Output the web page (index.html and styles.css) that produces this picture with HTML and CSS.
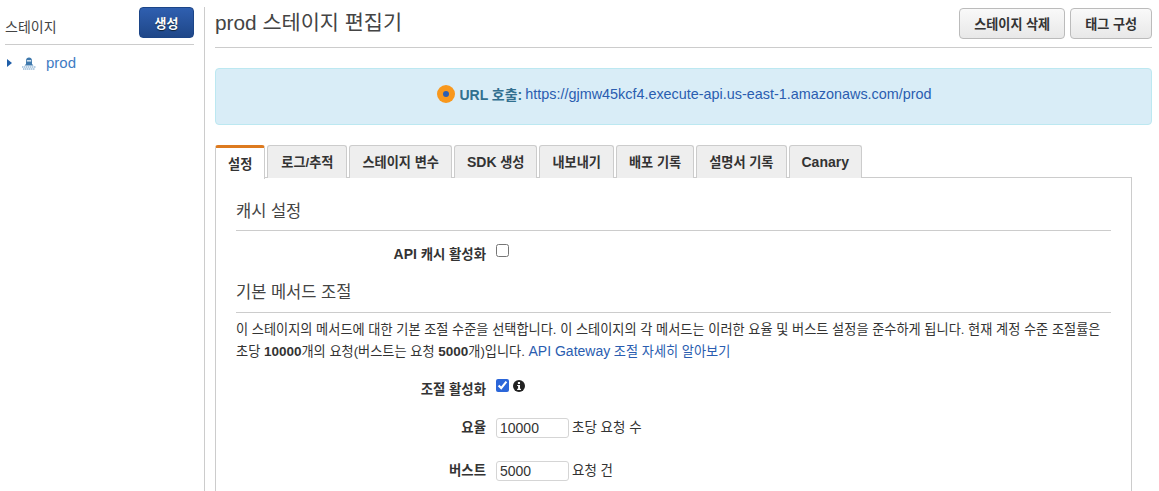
FILE: index.html
```html
<!DOCTYPE html>
<html lang="ko">
<head>
<meta charset="utf-8">
<title>prod 스테이지 편집기</title>
<link rel="stylesheet" href="styles.css">
</head>
<body>
<div class="app">
  <aside class="sidebar">
    <div class="side-head">
      <span class="side-title">스테이지</span>
      <button class="btn-primary">생성</button>
    </div>
    <div class="tree-row">
      <span class="caret"></span>
      <svg class="stage-icon" width="14" height="13" viewBox="0 0 14 13"><path d="M2.500 8.500 4 7V3.500C4 1.800 5.300.5 7 .5s3 1.300 3 3V7l1.500 1.500z" fill="#3f79ad"/><rect x="4.800" y="3" width="4.400" height="1.600" fill="#cfe0ef"/><path d="M0 10h14M1 12h12" stroke="#6a9ac6" stroke-width="1.200" stroke-dasharray="1.500 .5"/></svg>
      <a class="tree-link">prod</a>
    </div>
  </aside>
  <main class="main">
    <header class="main-head">
      <h1>prod 스테이지 편집기</h1>
      <div class="actions">
        <button class="btn">스테이지 삭제</button>
        <button class="btn">태그 구성</button>
      </div>
    </header>
    <div class="banner">
      <span class="dot"></span>
      <b class="banner-label">URL 호출:</b>
      <a class="link banner-link">https://gjmw45kcf4.execute-api.us-east-1.amazonaws.com/prod</a>
    </div>
    <nav class="tabs">
      <span class="tab active">설정</span>
      <span class="tab tab-wide">로그/추적</span>
      <span class="tab">스테이지 변수</span>
      <span class="tab"><span class="lat">SDK</span>&nbsp;생성</span>
      <span class="tab">내보내기</span>
      <span class="tab">배포 기록</span>
      <span class="tab">설명서 기록</span>
      <span class="tab"><span class="lat">Canary</span></span>
    </nav>
    <section class="panel">
      <h2 class="section first">캐시 설정</h2>
      <div class="form-row cache-row">
        <label class="label"><span class="lat">API</span> 캐시 활성화</label>
        <input type="checkbox" class="check">
      </div>
      <h2 class="section second">기본 메서드 조절</h2>
      <p class="desc">이 스테이지의 메서드에 대한 기본 조절 수준을 선택합니다. 이 스테이지의 각 메서드는 이러한 요율 및 버스트 설정을 준수하게 됩니다. 현재 계정 수준 조절률은 초당 <b class="digits">10000</b>개의 요청(버스트는 요청 <b class="digits">5000</b>개)입니다. <a class="link"><span class="lat">API Gateway</span> 조절 자세히 알아보기</a></p>
      <div class="form-row throttle-row">
        <label class="label">조절 활성화</label>
        <input type="checkbox" class="check" checked>
        <svg class="info" width="12" height="12" viewBox="0 0 13 13"><circle cx="6.500" cy="6.500" r="6.500" fill="#222"/><rect x="5.300" y="2.200" width="2.300" height="2.100" fill="#fff"/><path d="M4.500 5.300h3.100v4.200h1v1.300H4.500V9.500h1V6.600h-1z" fill="#fff"/></svg>
      </div>
      <div class="form-row rate-row">
        <label class="label raised">요율</label>
        <input type="text" class="num" value="10000">
        <span class="unit raised">초당 요청 수</span>
      </div>
      <div class="form-row burst-row">
        <label class="label raised">버스트</label>
        <input type="text" class="num" value="5000">
        <span class="unit raised">요청 건</span>
      </div>
    </section>
  </main>
</div>
</body>
</html>
```
FILE: styles.css
```css
* { box-sizing: border-box; }
html, body { margin: 0; height: 100%; overflow: hidden; background: #fff; }
body {
  font-family: "Liberation Sans", "Noto Sans CJK KR", sans-serif;
  font-size: 13.2px;
  color: #333;
}
.lat { font-size: 14px; line-height: 1; }
.digits { font-size: 13.5px; line-height: 1; }
.app { display: flex; height: 491px; overflow: hidden; padding: 7px 7px 0 5px; }
.sidebar { width: 200px; flex: none; padding-right: 10px; border-right: 1px solid #ccc; }
.side-head {
  display: flex; justify-content: space-between; align-items: flex-start;
  height: 38px; border-bottom: 1px solid #ccc;
}
.side-title { font-size: 14px; margin-top: 9px; color: #444; }
.btn-primary {
  width: 55px; height: 31px; border: 1px solid #1c4587; border-radius: 4px;
  background: linear-gradient(#2f5fb0, #1f4788); color: #fff;
  font: bold 13px "Liberation Sans", "Noto Sans CJK KR", sans-serif;
  text-shadow: 0 1px 1px #123;
  padding: 0;
}
.tree-row { display: flex; align-items: center; height: 18px; margin-top: 9px; padding-left: 2px; }
.caret {
  width: 0; height: 0; border-left: 5px solid #1f5ea8;
  border-top: 4.500px solid transparent; border-bottom: 4.500px solid transparent;
}
.stage-icon { margin-left: 10px; }
.tree-link { margin-left: 10px; font-size: 15px; color: #3f7cc4; position: relative; top: -1px; }
.main { flex: 1; min-width: 0; padding-left: 10px; }
.main-head {
  display: flex; justify-content: space-between; align-items: flex-start;
  height: 41px; border-bottom: 1px solid #ccc;
}
h1 { margin: 0; font-size: 20.8px; font-weight: 400; line-height: 31px; color: #444; }
.actions { display: flex; gap: 5px; margin-top: 1px; }
.btn {
  height: 31px; padding: 0 14px; border: 1px solid #bbb; border-radius: 4px;
  background: linear-gradient(#f9f9f9, #e8e8e8); color: #333;
  font: bold 13.1px "Liberation Sans", "Noto Sans CJK KR", sans-serif;
}
.banner {
  display: flex; align-items: center; justify-content: center;
  height: 57px; margin-top: 20px; padding: 0 0 5px 2px; background: #d9edf7; border: 1px solid #bce8f1; border-radius: 4px;
  font-size: 14px; color: #31708f;
}
.dot {
  width: 18px; height: 18px; border-radius: 50%; background: #f8981d; margin-right: 4px;
  display: flex; align-items: center; justify-content: center;
}
.dot::after { content: ""; width: 6px; height: 6px; border-radius: 50%; background: #2c5fb3; }
.banner-label { margin-right: 3px; }
.banner-link { font-size: 14.4px; }
.link { color: #2a5db0; }
.tabs { display: flex; gap: 2px; margin: 20px 20px 0 0; height: 33px; border-bottom: 1px solid #ccc; }
.tab {
  height: 33px; padding: 0 12px 1px; display: flex; align-items: center; font-weight: bold; font-size: 13.2px;
  background: #eee; border: 1px solid #ccc; border-bottom: 0; border-radius: 3px 3px 0 0; color: #333;
}
.tab-wide { padding: 0 13px 1px; }
.tab.active { background: #fff; border-top: 3px solid #dd7a1f; height: 34px; border-color: #dd7a1f #ccc #fff; position: relative; z-index: 1; }
.panel { margin-right: 20px; border: 1px solid #ccc; border-top: 0; padding: 0 20px; height: 320px; }
.section { margin: 0; font-size: 16.5px; font-weight: 400; color: #444; border-bottom: 1px solid #ccc; line-height: 24px; }
.first { padding: 21px 0 7px; }
.second { padding: 5px 0 8px; }
.form-row { display: flex; align-items: center; }
.label { width: 250px; text-align: right; font-weight: bold; font-size: 13.4px; margin-right: 10px; flex: none; }
.check { width: 13px; height: 13px; margin: 0 0 6px; accent-color: #2b66d9; flex: none; }
.cache-row { height: 44px; }
.desc { margin: 6px 0 0; line-height: 22px; height: 44px; }
.throttle-row { margin-top: 15px; height: 20px; }
.info { margin: 0 0 4px 4px; }
.rate-row { margin-top: 20px; height: 20px; }
.burst-row { margin-top: 23px; height: 20px; }
.raised { margin-bottom: 5px; }
.num {
  width: 73px; height: 20px; border: 1px solid #d5d5d5; border-radius: 3px; padding: 0 3px;
  font: 14px "Liberation Sans", sans-serif; color: #333; margin: 0;
}
.unit { margin-left: 3px; font-size: 13.5px; }
```
